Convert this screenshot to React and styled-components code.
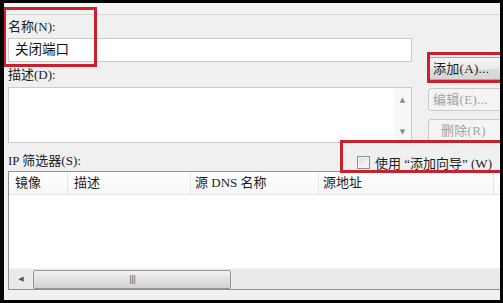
import React from 'react';
import styled, { createGlobalStyle } from 'styled-components';

const GlobalStyle = createGlobalStyle`
  html, body {
    margin: 0;
    padding: 0;
    background: #000;
    overflow: hidden;
  }
  * {
    box-sizing: border-box;
  }
`;

const FONT = `"Liberation Serif", "Noto Sans CJK SC", serif`;

const Frame = styled.div`
  position: relative;
  width: 503px;
  height: 303px;
  border-style: solid;
  border-color: #050505;
  border-width: 3px 3px 3px 4px;
  background: #f0f0f0;
  overflow: hidden;
  font-family: ${FONT};
  font-size: 13px;
  color: #1e1e1e;
`;

const TopStrip = styled.div`
  height: 12px;
  background: #f3f3f3;
  border-bottom: 1px solid #d6d6d6;
`;

const Content = styled.div`
  padding: 0 0 0 4px;
  display: flex;
  flex-direction: column;
`;

const TopGrid = styled.div`
  display: grid;
  grid-template-columns: 404px 84px;
  column-gap: 16px;
`;

const Fields = styled.div`
  display: flex;
  flex-direction: column;
`;

const Label = styled.div`
  height: 16px;
  line-height: 16px;
  margin-top: ${p => p.$top || 0}px;
  white-space: nowrap;
  color: #222;
`;

const TextInput = styled.div`
  height: 24px;
  margin-top: 3px;
  background: #fff;
  border: 1px solid #c9cbd0;
  padding: 0 6px;
  line-height: 22px;
  font-size: 13.5px;
  color: #111;
`;

const TextArea = styled.div`
  height: 56px;
  margin-top: 4px;
  background: #fff;
  border: 1px solid #c9cbd0;
  display: flex;
  justify-content: flex-end;
`;

const VScroll = styled.div`
  width: 17px;
  background: #f8f8f8;
  display: flex;
  flex-direction: column;
  justify-content: space-between;
  align-items: center;
  padding: 8px 0 6px;
  color: #8a8a8a;
  font-size: 7px;
  line-height: 8px;
  font-family: "DejaVu Sans", sans-serif;
`;

const Buttons = styled.div`
  display: flex;
  flex-direction: column;
  gap: 8px;
  padding-top: 42px;
`;

const Button = styled.div`
  height: 23px;
  border: 1px solid ${p => (p.$disabled ? '#c9c9c9' : '#a7a7a7')};
  border-radius: 3px;
  background: ${p =>
    p.$disabled
      ? '#f4f4f4'
      : 'linear-gradient(#f4f4f4 0%, #ebebeb 50%, #dddddd 51%, #d6d6d6 100%)'};
  color: ${p => (p.$disabled ? '#a3a3a3' : '#1e1e1e')};
  line-height: 21px;
  padding-left: ${p => p.$pad || 4}px;
  white-space: nowrap;
  letter-spacing: 0.3px;
`;

const FilterRow = styled.div`
  display: grid;
  grid-template-columns: 349px 1fr;
  height: 20px;
  margin-top: 6px;
  align-items: center;
`;

const CheckLabel = styled.div`
  display: flex;
  align-items: center;
  gap: 5px;
  white-space: nowrap;
  padding-top: 4px;
`;

const Box = styled.span`
  width: 13px;
  height: 13px;
  border: 1px solid #8e8f8f;
  background: linear-gradient(135deg, #dcdcdc, #fbfbfb);
  box-shadow: inset 0 0 0 1px #f4f4f4;
`;

const List = styled.div`
  height: 119px;
  margin-top: 2px;
  width: 510px;
  background: #fff;
  border: 1px solid #8e9096;
  display: flex;
  flex-direction: column;
`;

const Header = styled.div`
  display: flex;
  height: 23px;
  background: linear-gradient(#ffffff, #f6f7f9);
  border-bottom: 1px solid #e4e6ea;
`;

const Col = styled.div`
  width: ${p => p.$w}px;
  flex: none;
  border-right: 1px solid #e4e6ea;
  padding-left: ${p => p.$pad || 6}px;
  line-height: 22px;
  white-space: nowrap;
`;

const ListBody = styled.div`
  flex: 1;
`;

const HScroll = styled.div`
  height: 21px;
  background: #eaeaea;
  border-top: 1px solid #f4f4f4;
  display: flex;
  align-items: center;
`;

const Arrow = styled.div`
  width: 24px;
  text-align: center;
  color: #555;
  font-size: 7px;
  font-family: "DejaVu Sans", sans-serif;
`;

const Thumb = styled.div`
  width: 198px;
  height: 19px;
  border: 1px solid #979797;
  border-radius: 2px;
  background: linear-gradient(#f2f2f2, #e0e0e0 50%, #d2d2d2);
  display: flex;
  align-items: center;
  justify-content: center;
  color: #666;
  font-size: 9px;
  letter-spacing: -1px;
  font-family: "DejaVu Sans", sans-serif;
`;

const Mark = styled.div`
  position: absolute;
  left: ${p => p.$x}px;
  top: ${p => p.$y}px;
  width: ${p => p.$w}px;
  height: ${p => p.$h}px;
  border: 3px solid #c8202c;
  pointer-events: none;
`;

export default function App() {
  return (
    <Frame>
      <GlobalStyle />
      <TopStrip />
      <Content>
        <TopGrid>
          <Fields>
            <Label $top={4}>名称(N):</Label>
            <TextInput>关闭端口</TextInput>
            <Label $top={5}>描述(D):</Label>
            <TextArea>
              <VScroll>
                <span>▲</span>
                <span>▼</span>
              </VScroll>
            </TextArea>
          </Fields>
          <Buttons>
            <Button>添加(A)...</Button>
            <Button $disabled>编辑(E)...</Button>
            <Button $disabled $pad={12}>删除(R)</Button>
          </Buttons>
        </TopGrid>
        <FilterRow>
          <Label>IP 筛选器(S):</Label>
          <CheckLabel>
            <Box />
            使用 “添加向导” (W)
          </CheckLabel>
        </FilterRow>
        <List>
          <Header>
            <Col $w={59}>镜像</Col>
            <Col $w={123}>描述</Col>
            <Col $w={128} $pad={4}>源 DNS 名称</Col>
            <Col $w={175} $pad={4}>源地址</Col>
          </Header>
          <ListBody />
          <HScroll>
            <Arrow>◀</Arrow>
            <Thumb>|||</Thumb>
          </HScroll>
        </List>
      </Content>
      <Mark $x={-1} $y={4} $w={94} $h={60} />
      <Mark $x={423} $y={49} $w={80} $h={31} />
      <Mark $x={336} $y={137} $w={170} $h={33} />
    </Frame>
  );
}
